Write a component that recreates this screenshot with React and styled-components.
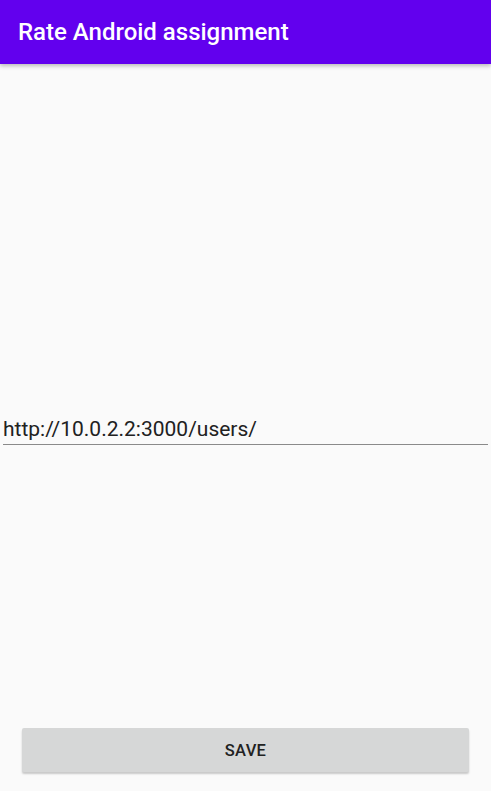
import styled, { createGlobalStyle } from 'styled-components'

const GlobalStyle = createGlobalStyle`
  html, body {
    margin: 0;
    padding: 0;
    background: #fafafa;
  }
  #root {
    height: 791px;
  }
`

const Screen = styled.div`
  display: flex;
  flex-direction: column;
  height: 791px;
  background: #fafafa;
  font-family: Roboto, 'Noto Sans', sans-serif;
`

const AppBar = styled.header`
  height: 64px;
  flex-shrink: 0;
  display: flex;
  align-items: center;
  padding: 0 18px;
  background: #6200ee;
  box-shadow: 0 2px 4px rgba(0, 0, 0, 0.25);
  position: relative;
  z-index: 1;
`

const Title = styled.h1`
  margin: 0;
  color: #ffffff;
  font-size: 24px;
  font-weight: 500;
  letter-spacing: 0;
`

const Body = styled.main`
  flex: 1;
  display: flex;
  flex-direction: column;
  justify-content: center;
  padding: 0 3px;
`

const UrlInput = styled.input`
  width: 100%;
  box-sizing: border-box;
  border: none;
  border-bottom: 1px solid #8a8a8a;
  background: transparent;
  padding: 0 0 3px 0;
  margin-top: 70px;
  font-family: Roboto, 'Noto Sans', sans-serif;
  font-size: 21px;
  color: #212121;
  outline: none;
`

const Footer = styled.div`
  padding: 0 22px 19px;
`

const SaveButton = styled.button`
  width: 100%;
  height: 44px;
  border: none;
  border-radius: 2px;
  background: #d6d7d7;
  box-shadow: 0 2px 2px rgba(0, 0, 0, 0.2);
  font-family: Roboto, 'Noto Sans', sans-serif;
  font-size: 16.5px;
  font-weight: 500;
  color: #222;
  letter-spacing: 0.3px;
  cursor: pointer;
`

const App = () => {
  return (
    <>
      <GlobalStyle />
      <Screen>
        <AppBar>
          <Title>Rate Android assignment</Title>
        </AppBar>
        <Body>
          <UrlInput defaultValue="http://10.0.2.2:3000/users/" />
        </Body>
        <Footer>
          <SaveButton>SAVE</SaveButton>
        </Footer>
      </Screen>
    </>
  )
}

export default App
